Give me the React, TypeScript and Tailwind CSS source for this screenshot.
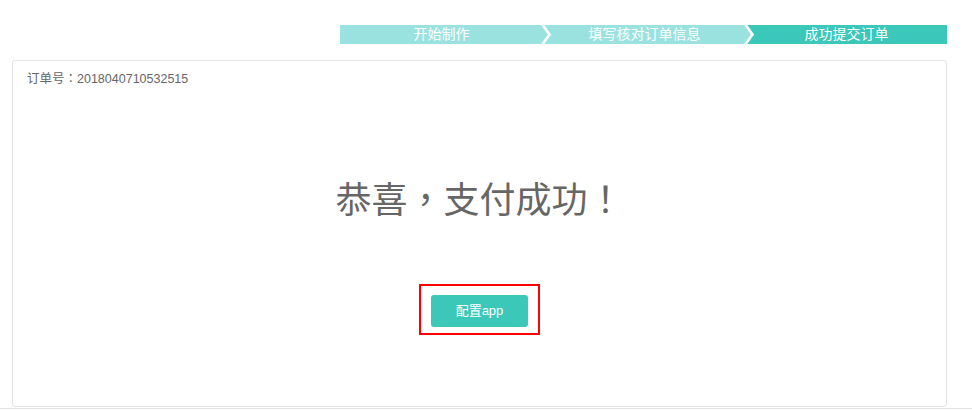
const font = { fontFamily: '"Liberation Sans", "Noto Sans CJK SC", sans-serif' };
const cjk = { fontFamily: '"Noto Sans CJK TC", "Noto Sans CJK SC", sans-serif' };

const Chevron = ({ fill }: { fill: string }) => (
    <svg
        className="absolute top-0 h-[19px] w-[14px]"
        viewBox="0 0 14 19"
        style={{ left: -4 }}
    >
        <polygon points="0,0 3,0 10.5,9.5 3,19 0,19" fill={fill} />
        <polyline
            points="3,-1 10.5,9.5 3,20"
            fill="none"
            stroke="#ffffff"
            strokeWidth="2.6"
        />
    </svg>
);

const App = () => {
    return (
        <div className="w-[972px] h-[410px] bg-white overflow-hidden" style={font}>
            <div className="pt-[25px]">
                <div className="ml-[340px] w-[607px] h-[19px] flex text-white text-[14px] leading-[19px]">
                    <div className="w-[203px] bg-[#9ae2e0] text-center">开始制作</div>
                    <div className="relative w-[203px] bg-[#9ae2e0] text-center">
                        <Chevron fill="#9ae2e0" />
                        填写核对订单信息
                    </div>
                    <div className="relative w-[201px] bg-[#3bc7b9] text-center">
                        <Chevron fill="#9ae2e0" />
                        成功提交订单
                    </div>
                </div>
            </div>
            <div className="mt-[16px] ml-[12px] w-[935px] h-[347px] border border-[#e3e3e3] rounded-[3px] flex flex-col">
                <p className="pt-[8px] pl-[14px] text-[12.5px] leading-[18px] h-[26px] text-[#666]">
                    <span style={cjk}>订单号：</span>2018040710532515
                </p>
                <h1
                    className="mt-[92px] text-center text-[36px] leading-[36px] h-[36px] text-[#666]"
                    style={cjk}
                >
                    恭喜，支付成功！
                </h1>
                <div className="mt-[69px] mx-auto w-[121px] h-[51px] border-2 border-[#ff0000] pt-[9px] pl-[10px]">
                    <button
                        type="button"
                        className="w-[97px] h-[32px] rounded-[3px] bg-[#3cc8b9] text-white text-[13px]"
                        style={font}
                    >
                        配置app
                    </button>
                </div>
            </div>
            <div className="mt-[1px] h-[1px] bg-[#e3e3e3]" />
        </div>
    );
};

export default App;
